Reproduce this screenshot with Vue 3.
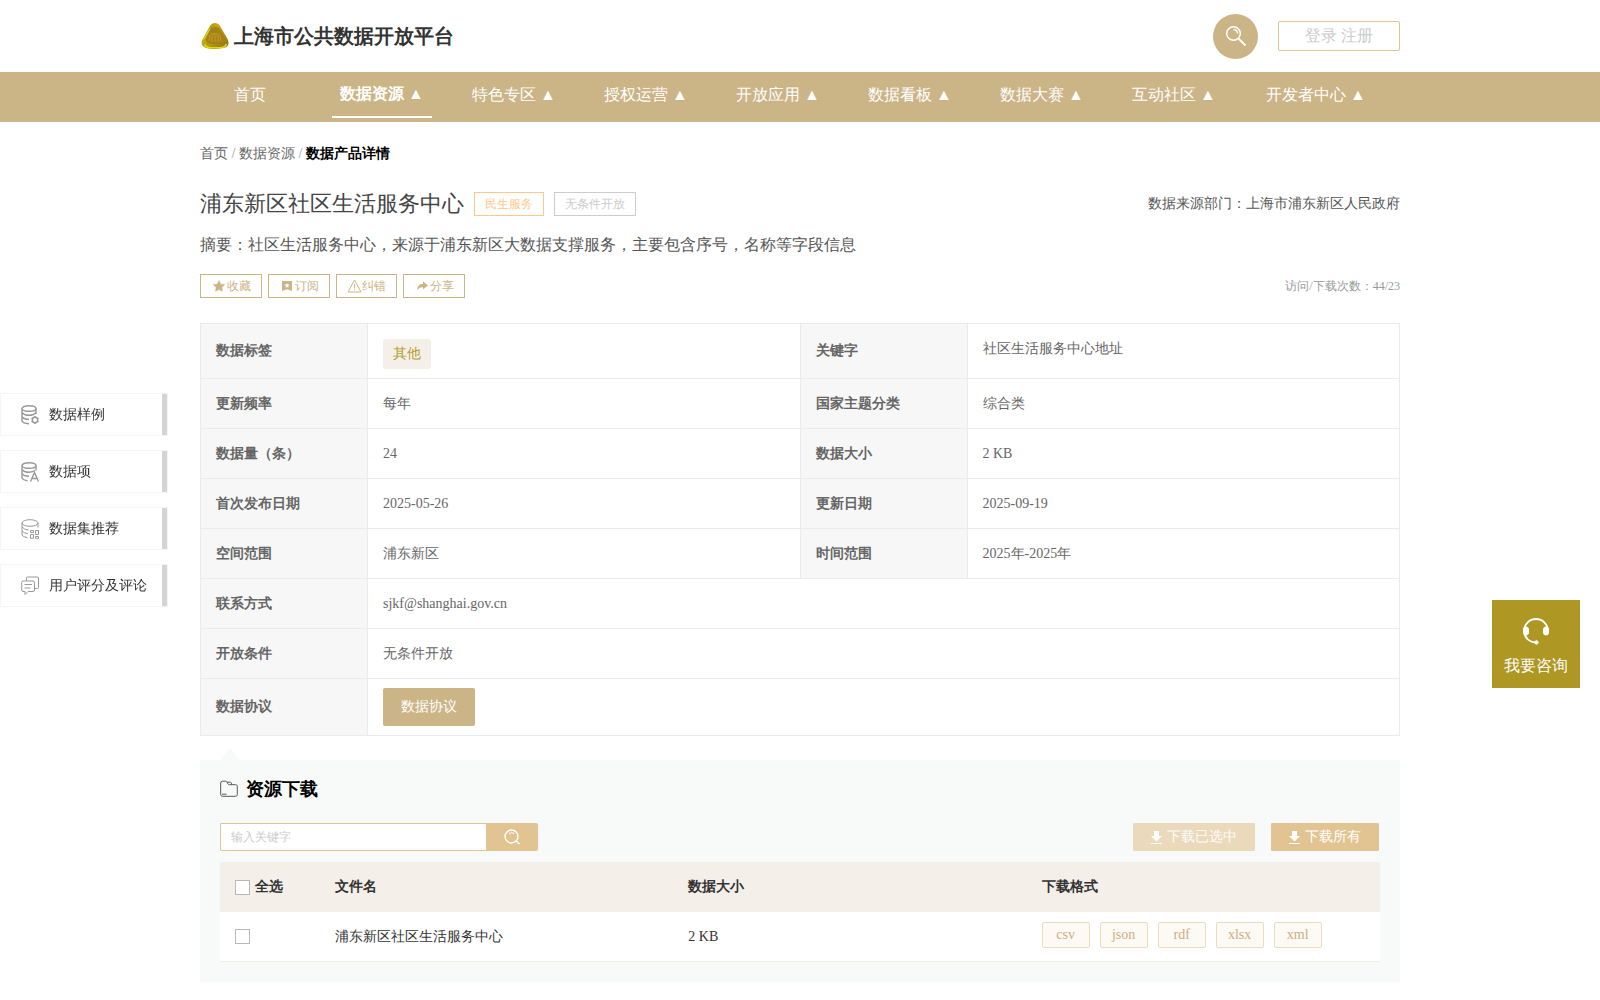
<script setup>
import { ref } from 'vue'

const nav = ['首页', '数据资源', '特色专区', '授权运营', '开放应用', '数据看板', '数据大赛', '互动社区', '开发者中心']
const active = 1
const rows = [
  ['更新频率', '每年', '国家主题分类', '综合类'],
  ['数据量（条）', '24', '数据大小', '2 KB'],
  ['首次发布日期', '2025-05-26', '更新日期', '2025-09-19'],
  ['空间范围', '浦东新区', '时间范围', '2025年-2025年'],
]
const wideRows = [
  ['联系方式', 'sjkf@shanghai.gov.cn'],
  ['开放条件', '无条件开放'],
]
const formats = ['csv', 'json', 'rdf', 'xlsx', 'xml']
const keyword = ref('')
const picked = ref(false)
</script>

<template>
  <div class="page">
    <header class="wrap header">
      <a href="#" class="brand">
        <svg width="30" height="28" viewBox="0 0 30 28" aria-hidden="true">
          <defs>
            <linearGradient id="gold" x1="0" y1="0" x2="1" y2="1">
              <stop offset="0" stop-color="#8d8a12" />
              <stop offset=".35" stop-color="#c3ac12" />
              <stop offset=".7" stop-color="#a98a10" />
              <stop offset="1" stop-color="#8a6a1a" />
            </linearGradient>
          </defs>
          <path d="M10.500 3Q15 -1 19.500 3L27.500 17Q30.500 23.500 25 25.500Q15 28 6 26Q.5 24.500 2 18.500Z" fill="url(#gold)" />
          <path d="M4.500 22.500Q6.500 26 12 25.800H20Q25 25.500 26.500 22" fill="none" stroke="#dcdc08" stroke-width="1.600" />
          <path d="M4 17L10 7" stroke="#d4cf20" stroke-width="1.500" />
          <path d="M11 6Q15 3.500 19 6L25 16Q25 22 15 22T5.500 17Z" fill="#a58216" />
          <path d="M9 19Q9 13 12 11M12 20Q11 14 14 11M15 20V11M18 20Q19 14 16 11M21 19Q21 13 18 11" fill="none" stroke="#cca42c" stroke-width=".8" />
        </svg>
        <span>上海市公共数据开放平台</span>
      </a>
      <div class="tools">
        <button class="round" aria-label="搜索">
          <svg width="22" height="22" viewBox="0 0 22 22" fill="none" stroke="#fff" aria-hidden="true">
            <circle cx="8.500" cy="8.500" r="6.800" stroke-width="1.500" />
            <path d="M13.500 13.500L20.500 20.500" stroke-width="1.800" />
            <path d="M8.500 4.500Q12.500 4.700 12.500 8.500" stroke-width="1.300" />
          </svg>
        </button>
        <div class="login"><a href="#">登录</a>&nbsp;<a href="#">注册</a></div>
      </div>
    </header>

    <nav class="nav">
      <div class="wrap nav-row">
        <a v-for="(n, i) in nav" :key="n" href="#" :class="{ on: i === active }">{{ n }}{{ i ? ' ▲' : '' }}</a>
      </div>
    </nav>

    <main class="wrap">
      <div class="crumbs"><a href="#">首页</a> / <a href="#">数据资源</a> / <b>数据产品详情</b></div>

      <div class="title-row">
        <h1>浦东新区社区生活服务中心</h1>
        <span class="tag warm">民生服务</span>
        <span class="tag">无条件开放</span>
        <span class="source">数据来源部门：上海市浦东新区人民政府</span>
      </div>
      <p class="summary">摘要：社区生活服务中心，来源于浦东新区大数据支撑服务，主要包含序号，名称等字段信息</p>

      <div class="actions">
        <button>
          <svg width="14" height="14" viewBox="0 0 14 14" aria-hidden="true"><path d="M7 1.500L8.700 5.200L12.700 5.600L9.900 8.500L10.500 12.300L7 10.600L3.500 12.300L4.100 8.500L1.300 5.600L5.300 5.200Z" fill="currentColor" stroke="currentColor" stroke-width=".5" /></svg>收藏
        </button>
        <button>
          <svg width="14" height="14" viewBox="0 0 14 14" aria-hidden="true"><path d="M2 2H12V12L7 10.300L2 12ZM7 4L6.300 5.500L4.500 5.700L5.800 7L5.500 8.700L7 7.900L8.500 8.700L8.200 7L9.500 5.700L7.700 5.500Z" fill="currentColor" fill-rule="evenodd" /></svg>订阅
        </button>
        <button class="wide-icon">
          <svg width="15" height="14" viewBox="0 0 15 14" fill="none" stroke="currentColor" aria-hidden="true"><path d="M7.500 1L14 13H1ZM7.500 5V9.500M7.500 10.500V11.500" /></svg>纠错
        </button>
        <button>
          <svg width="14" height="14" viewBox="0 0 14 14" aria-hidden="true"><path d="M8 2.500L13 6.500L8 10.300V8.200Q4 8 2 11.500Q2.200 5.300 8 4.800Z" fill="currentColor" /></svg>分享
        </button>
        <span class="visits">访问/下载次数：44/23</span>
      </div>

      <table class="info">
        <colgroup><col class="c-key" /><col /><col class="c-key" /><col /></colgroup>
        <tbody>
          <tr class="first">
            <th scope="row">数据标签</th>
            <td><span class="chip">其他</span></td>
            <th scope="row">关键字</th>
            <td class="high">社区生活服务中心地址</td>
          </tr>
          <tr v-for="r in rows" :key="r[0]">
            <th scope="row">{{ r[0] }}</th><td>{{ r[1] }}</td>
            <th scope="row">{{ r[2] }}</th><td>{{ r[3] }}</td>
          </tr>
          <tr v-for="r in wideRows" :key="r[0]">
            <th scope="row">{{ r[0] }}</th><td colspan="3">{{ r[1] }}</td>
          </tr>
          <tr class="last">
            <th scope="row">数据协议</th>
            <td colspan="3"><button class="agree">数据协议</button></td>
          </tr>
        </tbody>
      </table>

      <section class="panel">
        <h2>
          <svg width="18" height="18" viewBox="0 0 18 18" fill="none" stroke="#555" aria-hidden="true">
            <path d="M.7 14.500V3Q.7 1.200 2.500 1.200H5.500Q6.500 1.200 7 2.200L7.800 3.700Q8.300 4.700 9.500 4.700H15.500Q17.300 4.700 17.300 6.500V14.500Q17.300 16.300 15.500 16.300H2.500Q.7 16.300 .7 14.500ZM2 14.200H6.500M7 2.200H10.500Q11.500 2.200 11.500 4.500" />
          </svg>
          资源下载
        </h2>
        <div class="bar">
          <form class="search" @submit.prevent>
            <input v-model="keyword" type="text" placeholder="输入关键字" aria-label="关键字" />
            <button aria-label="搜索">
              <svg width="18" height="18" viewBox="0 0 18 18" fill="none" stroke="#fff" aria-hidden="true">
                <circle cx="8.500" cy="8.500" r="6.500" stroke-width="1.400" /><path d="M13 13L16.500 16" stroke-width="1.600" /><path d="M6 5.500Q8.500 4 11 5.500" />
              </svg>
            </button>
          </form>
          <div class="downloads">
            <button v-for="(d, i) in ['下载已选中', '下载所有']" :key="d" :disabled="i === 0">
              <svg width="11" height="13" viewBox="0 0 11 13" fill="#fff" aria-hidden="true"><path d="M3 0H8V5H11L5.500 10.500L0 5H3ZM0 12H11V13H0Z" /></svg>{{ d }}
            </button>
          </div>
        </div>
        <table class="files">
          <colgroup><col class="c-check" /><col /><col /><col /></colgroup>
          <thead>
            <tr>
              <th scope="col"><label><input v-model="picked" type="checkbox" />全选</label></th>
              <th scope="col">文件名</th><th scope="col">数据大小</th><th scope="col">下载格式</th>
            </tr>
          </thead>
          <tbody>
            <tr>
              <td><label><input v-model="picked" type="checkbox" aria-label="浦东新区社区生活服务中心" /></label></td>
              <td>浦东新区社区生活服务中心</td>
              <td>2 KB</td>
              <td><div class="formats"><a v-for="f in formats" :key="f" href="#">{{ f }}</a></div></td>
            </tr>
          </tbody>
        </table>
      </section>
    </main>

    <aside class="side">
      <a href="#">
        <svg width="18" height="20" viewBox="0 0 18 20" aria-hidden="true">
          <ellipse cx="8" cy="3.500" rx="7" ry="2.800" /><path d="M1 3.500V16Q2 18.500 8 18.700M15 3.500V9M1 7.500Q3 10.300 8 10.300T15 7.500M1 11.700Q3 14.300 8 14.300" />
          <circle cx="14" cy="15" r="2.700" /><path d="M14 11V12.300M14 17.700V19M10.500 13L11.700 13.700M16.300 16.300L17.500 17M17.500 13L16.300 13.700M11.700 16.300L10.500 17" />
        </svg>数据样例
      </a>
      <a href="#">
        <svg width="18" height="20" viewBox="0 0 18 20" aria-hidden="true">
          <ellipse cx="8" cy="3.500" rx="7" ry="2.800" /><path d="M1 3.500V16Q2 18 6.500 18.700M15 3.500V8.500M1 7.500Q3 10.300 8 10.300Q12 10 14 8.500M1 11.700Q3 14 8 14.300" />
          <path d="M9.500 19.500L13.500 10.500L17.500 19.500M11 16.500H16" />
        </svg>数据项
      </a>
      <a href="#">
        <svg width="18" height="20" viewBox="0 0 18 20" class="light" aria-hidden="true">
          <ellipse cx="9" cy="4" rx="8" ry="3.300" /><path d="M1 4V16Q2 18 6.500 18.700M17 4V8.500M1 8Q3 10.500 7.500 11M1 12Q3 14.300 7 14.700" />
          <path d="M9.500 11.500H12.500V13.500H9.500ZM14.500 11.500H17.500V15.500H14.500ZM9.500 15.500H12.500V19.300H9.500ZM14.500 17.500H17.500V19.300H14.500Z" />
        </svg>数据集推荐
      </a>
      <a href="#">
        <svg width="18" height="20" viewBox="0 0 18 20" class="light" aria-hidden="true">
          <path d="M2 5H12Q13.500 5 13.500 6.500V14Q13.500 15.500 12 15.500H7L4 18.500V15.500H2Q.7 15.500 .7 14V6.500Q.7 5 2 5ZM5.500 5V2Q5.500 1 6.500 1H16.500Q17.500 1 17.500 2V11.500Q17.500 12.500 16.500 12.500H13.500M3.500 8.500H11M3.500 12H9.500" />
        </svg>用户评分及评论
      </a>
    </aside>

    <button class="consult">
      <svg width="28" height="28" viewBox="0 0 28 28" fill="none" stroke="#fff" aria-hidden="true">
        <path d="M2 14A12 12 0 0 1 26 14M2 14Q3 24.500 14 25.500" stroke-width="1.800" />
        <rect x="1.500" y="10" width="5" height="8" rx="2.200" fill="#fff" /><rect x="21.500" y="10" width="5" height="8" rx="2.200" fill="#fff" />
        <circle cx="14.500" cy="25.500" r="1.700" fill="#fff" />
      </svg>
      我要咨询
    </button>
  </div>
</template>

<style>
body { margin: 0; background: #fff; }
</style>

<style scoped>
.page {
  font-family: "Liberation Serif", "WenQuanYi Micro Hei", serif;
  font-size: 14px;
  line-height: 20px;
  color: #666;
}
.page * { box-sizing: border-box; }
a { color: inherit; text-decoration: none; }
button, input { font-family: inherit; }
button { padding: 0; border: 0; cursor: pointer; }
svg { display: block; flex: none; }
.wrap { max-width: 1200px; margin: 0 auto; }

.header { display: flex; justify-content: space-between; align-items: center; height: 72px; }
.brand { display: flex; align-items: center; gap: 4px; font-size: 20px; font-weight: bold; line-height: 28px; color: #333; }
.tools { display: flex; align-items: center; gap: 20px; }
.round { display: flex; align-items: center; justify-content: center; width: 45px; height: 45px; border-radius: 50%; background: #cbb486; }
.login { width: 122px; height: 30px; border: 1px solid #e1c491; border-radius: 2px; font-size: 16px; line-height: 28px; text-align: center; color: #ccc; }

.nav { background: #cbb486; }
.nav-row { display: flex; gap: 32px; height: 50px; }
.nav a { min-width: 100px; height: 46px; padding: 0 8px; font-size: 16px; line-height: 46px; text-align: center; white-space: nowrap; color: #fff; }
.nav a:last-child { padding: 0 10px; }
.nav a.on { border-bottom: 2px solid #fff; line-height: 44px; font-weight: bold; }

.crumbs { padding: 22px 0 20px; color: #999; }
.crumbs a { color: #666; }
.crumbs b { color: #000; }
.title-row { display: flex; align-items: center; gap: 10px; height: 40px; }
h1 { margin: 0; font-size: 22px; font-weight: normal; line-height: 40px; color: #444; }
.tag { height: 24px; padding: 0 10px; border: 1px solid #ccc; font-size: 12px; line-height: 22px; color: #ccc; }
.tag.warm { border-color: #ffc88a; color: #ffc88a; }
.source { margin-left: auto; color: #555; }
.summary { margin: 0; padding: 9px 0 17px; font-size: 16px; line-height: 24px; color: #555; }

.actions { display: flex; gap: 6px; height: 24px; }
.actions button { display: flex; align-items: center; gap: 1px; width: 62px; padding: 0 10px 0 11px; border: 1px solid #cbb486; background: #fff; font-size: 12px; white-space: nowrap; color: #cbb486; }
.actions .wide-icon { gap: 0; width: 61px; padding: 0 10px; }
.visits { margin-left: auto; font-size: 12px; line-height: 24px; color: #999; }

table { width: 100%; border-collapse: collapse; table-layout: fixed; }
th, td { padding: 0 15px; text-align: left; }
.info { margin-top: 25px; }
.info tr { height: 50px; }
.info tr.first { height: 55px; }
.info tr.last { height: 57px; }
.info th, .info td { border: 1px solid #ebebeb; }
.info th { background: #f7f7f7; }
.c-key { width: 167px; }
.info .high { padding-bottom: 4px; }
.chip { display: block; width: 48px; height: 30px; margin-top: 6px; border-radius: 3px; background: #f4efe8; line-height: 30px; text-align: center; color: #b39c28; }
.agree { display: block; width: 92px; height: 38px; border-radius: 2px; background: #cbb486; font-size: 14px; color: #fff; }

.panel { position: relative; margin-top: 24px; padding: 17px 20px 20px; background: #f8faf9; }
.panel::before { content: ""; position: absolute; left: 20px; top: -12px; border: solid transparent; border-width: 0 10px 12px; border-bottom-color: #f8faf9; }
h2 { display: flex; align-items: center; gap: 8px; margin: 0; font-size: 18px; line-height: 24px; color: #000; }
.bar { display: flex; justify-content: space-between; padding: 22px 1px 11px 0; }
.search { display: flex; width: 318px; height: 28px; }
.search input { flex: 1; min-width: 0; padding: 0 10px; border: 1px solid #e1c491; border-right: 0; border-radius: 2px 0 0 2px; outline: 0; background: #fff; font-size: 12px; }
.search input::placeholder { color: #ccc; }
.search button { display: flex; align-items: center; justify-content: center; width: 52px; border-radius: 0 2px 2px 0; background: #e1c491; }
.downloads { display: flex; gap: 16px; }
.downloads button { display: flex; align-items: center; gap: 5px; height: 28px; padding: 0 18px; border-radius: 1px; background: #e1c491; font-size: 14px; line-height: 26px; color: #fff; }
.downloads button:disabled { opacity: .6; }

.files { border-collapse: separate; border-spacing: 0; }
.files tr { height: 50px; }
.files th { background: #f4efe8; color: #333; }
.files td { border-bottom: 1px solid #f0ede6; background: #fff; color: #333; }
.c-check { width: 100px; }
.files label { display: flex; align-items: center; gap: 5px; }
.files input { appearance: none; width: 15px; height: 15px; margin: 0; border: 1px solid #b8b8b8; background: #fff; }
.files input:checked { background: #cbb486; }
.formats { display: flex; gap: 10px; padding-bottom: 4px; }
.formats a { width: 48px; height: 26px; border: 1px solid #ecdcbd; border-radius: 2px; background: #fdf9f5; line-height: 24px; text-align: center; color: #d0ae80; }

.side { position: fixed; left: 0; top: 393px; display: flex; flex-direction: column; gap: 14px; width: 168px; }
.side a { display: flex; align-items: center; gap: 10px; height: 43px; padding-left: 20px; border: 1px solid #f5f5f5; background: linear-gradient(#d4d4d4, #d4d4d4) right / 5px 100% no-repeat #fff; color: #333; }
.side svg { fill: none; stroke: #999; stroke-width: 1.4; }
.side svg.light { stroke-width: 1; }
.consult { position: fixed; right: 20px; top: 600px; display: flex; flex-direction: column; align-items: center; gap: 9px; width: 88px; height: 88px; padding-top: 17px; background: #ae9723; font-size: 16px; line-height: 24px; color: #fff; }
</style>
